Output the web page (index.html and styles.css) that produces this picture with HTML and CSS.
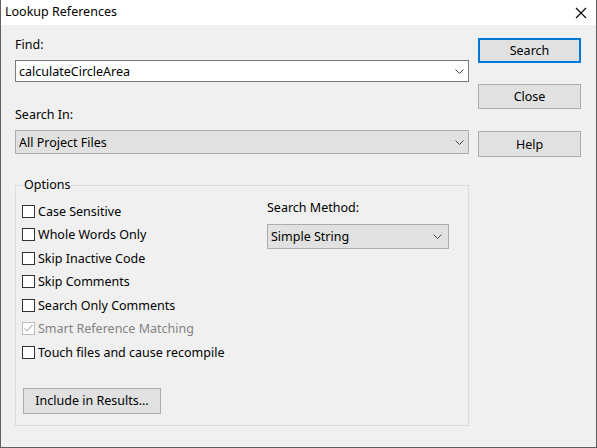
FILE: index.html
```html
<!DOCTYPE html>
<html>
<head>
<meta charset="utf-8">
<link rel="stylesheet" href="styles.css">
</head>
<body>
<div class="window">
  <div class="titlebar">
    <span class="title">Lookup References</span>
    <svg class="close-x" width="12" height="12" viewBox="0 0 12 12"><path d="M1 1 L11 11 M11 1 L1 11" stroke="#000" stroke-width="1.1" fill="none"/></svg>
  </div>
  <div class="content">
    <div class="main">
      <div class="label find-label">Find:</div>
      <div class="combo edit">
        <span>calculateCircleArea</span>
        <svg class="chev" width="9" height="5" viewBox="0 0 9 5"><path d="M0.5 0.5 L4.5 4.5 L8.5 0.5" stroke="#444" stroke-width="1" fill="none"/></svg>
      </div>
      <div class="label searchin-label">Search In:</div>
      <div class="combo dropdown">
        <span>All Project Files</span>
        <svg class="chev" width="9" height="5" viewBox="0 0 9 5"><path d="M0.5 0.5 L4.5 4.5 L8.5 0.5" stroke="#444" stroke-width="1" fill="none"/></svg>
      </div>
      <fieldset class="options">
        <legend>Options</legend>
        <div class="opts-row">
          <div class="checks">
            <div class="check-row"><span class="box"></span><span>Case Sensitive</span></div>
            <div class="check-row"><span class="box"></span><span>Whole Words Only</span></div>
            <div class="check-row"><span class="box"></span><span>Skip Inactive Code</span></div>
            <div class="check-row"><span class="box"></span><span>Skip Comments</span></div>
            <div class="check-row"><span class="box"></span><span>Search Only Comments</span></div>
            <div class="check-row disabled"><span class="box"><svg width="11" height="11" viewBox="0 0 11 11"><path d="M1.5 5.5 L4 8 L9.5 2" stroke="#bcbcbc" stroke-width="1.2" fill="none"/></svg></span><span>Smart Reference Matching</span></div>
            <div class="check-row"><span class="box"></span><span>Touch files and cause recompile</span></div>
          </div>
          <div class="method">
            <div class="label">Search Method:</div>
            <div class="combo dropdown method-select">
              <span>Simple String</span>
              <svg class="chev" width="9" height="5" viewBox="0 0 9 5"><path d="M0.5 0.5 L4.5 4.5 L8.5 0.5" stroke="#444" stroke-width="1" fill="none"/></svg>
            </div>
          </div>
        </div>
        <div class="btn include">Include in Results...</div>
      </fieldset>
    </div>
    <div class="buttons">
      <div class="btn default">Search</div>
      <div class="btn close">Close</div>
      <div class="btn help">Help</div>
    </div>
  </div>
</div>
</body>
</html>
```
FILE: styles.css
```css
html, body {
  margin: 0;
  padding: 0;
}
body {
  font-family: "Noto Sans", "Liberation Sans", sans-serif;
  font-size: 12.5px;
  color: #000;
  background: #f0f0f0;
}
.window {
  width: 597px;
  height: 448px;
  box-sizing: border-box;
  border: 1px solid #5f5f5f;
  border-top: none;
  background: #f0f0f0;
  overflow: hidden;
}
.titlebar {
  height: 25px;
  background: #fff;
  display: flex;
  align-items: center;
  justify-content: space-between;
  padding: 0 9px 0 4px;
}
.title {
  line-height: 16px;
  margin-top: -1px;
}
.close-x {
  display: block;
  margin-top: 1px;
}
.content {
  display: flex;
  padding: 12px 0 0 14px;
  gap: 9px;
}
.main {
  width: 454px;
  display: flex;
  flex-direction: column;
}
.label {
  height: 16px;
  line-height: 16px;
}
.find-label {
  margin-bottom: 7px;
}
.searchin-label {
  margin-top: 25px;
  margin-bottom: 7px;
}
.combo {
  box-sizing: border-box;
  display: flex;
  align-items: center;
  justify-content: space-between;
  padding: 0 4px 0 3px;
}
.combo .chev {
  display: block;
}
.edit {
  height: 22px;
  background: #fff;
  border: 1px solid #7a7a7a;
}
.dropdown {
  height: 24px;
  background: #e1e1e1;
  border: 1px solid #adadad;
}
.options {
  margin: 24px 0 0 0;
  padding: 0 0 11px 0;
  border: 1px solid #dcdcdc;
  min-width: 0;
}
.options legend {
  margin-left: 7px;
  padding: 0 1px;
  height: 14px;
  line-height: 14px;
}
.opts-row {
  display: flex;
}
.checks {
  width: 251px;
  box-sizing: border-box;
  padding: 7.5px 0 0 6px;
}
.check-row {
  height: 23.5px;
  display: flex;
  align-items: center;
  gap: 3px;
}
.box {
  width: 13px;
  height: 13px;
  box-sizing: border-box;
  border: 1px solid #333;
  background: #fff;
  display: flex;
  align-items: center;
  justify-content: center;
}
.disabled {
  color: #838383;
}
.disabled .box {
  border-color: #bcbcbc;
}
.disabled .box svg {
  display: block;
}
.method {
  padding-top: 7.5px;
  display: flex;
  flex-direction: column;
}
.method .label {
  margin-bottom: 8px;
}
.method-select {
  width: 182px;
  height: 25px;
  padding-right: 6px;
}
.btn {
  box-sizing: border-box;
  height: 25px;
  background: #e1e1e1;
  border: 1px solid #adadad;
  display: flex;
  align-items: center;
  justify-content: center;
}
.include {
  width: 138px;
  height: 26px;
  margin: 23.5px 0 0 7px;
}
.buttons {
  width: 103px;
  padding-top: 1px;
  display: flex;
  flex-direction: column;
}
.default {
  border: 2px solid #0078d7;
}
.close {
  margin-top: 21px;
}
.help {
  margin-top: 22px;
  height: 26px;
}
```
